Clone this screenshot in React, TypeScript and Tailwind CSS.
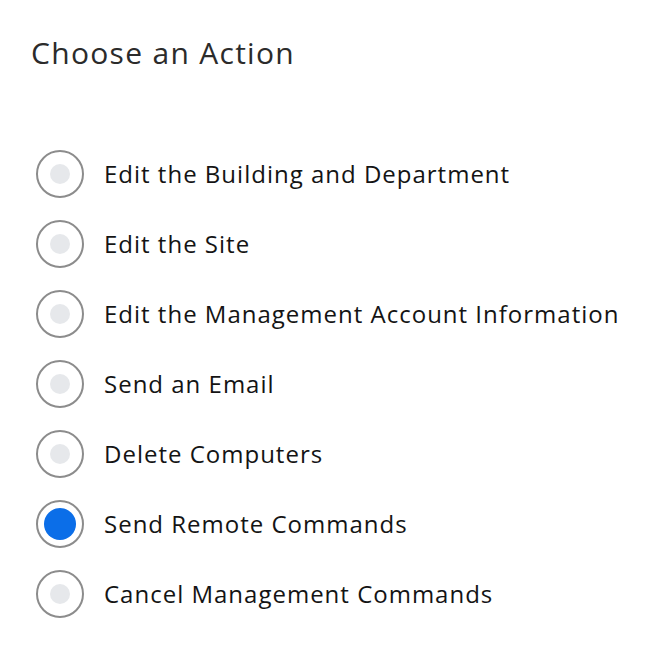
import React, { useState } from 'react';

const actions = [
  'Edit the Building and Department',
  'Edit the Site',
  'Edit the Management Account Information',
  'Send an Email',
  'Delete Computers',
  'Send Remote Commands',
  'Cancel Management Commands',
];

export default function App() {
  const [selected, setSelected] = useState(5);

  return (
    <div className="w-[662px] h-[666px] bg-white pl-[31px] pt-[34px] font-['Open_Sans',sans-serif]">
      <h1 className="text-[30px] leading-[38px] text-[#2b2b2b] tracking-[1.3px]">Choose an Action</h1>

      <div className="mt-[78px] flex flex-col gap-[22px] pl-[5px]">
        {actions.map((label, i) => (
          <label key={label} className="flex items-center gap-[20px] cursor-pointer" onClick={() => setSelected(i)}>
            <span className="w-[48px] h-[48px] rounded-full border-2 border-[#8c8c8c] bg-white flex items-center justify-center shrink-0">
              {selected === i ? (
                <span className="w-[32px] h-[32px] rounded-full bg-[#0b6ee8]" />
              ) : (
                <span className="w-[20px] h-[20px] rounded-full bg-[#e6e8eb]" />
              )}
            </span>
            <span className="text-[24px] text-[#141414] tracking-[1px]">{label}</span>
          </label>
        ))}
      </div>
    </div>
  );
}
